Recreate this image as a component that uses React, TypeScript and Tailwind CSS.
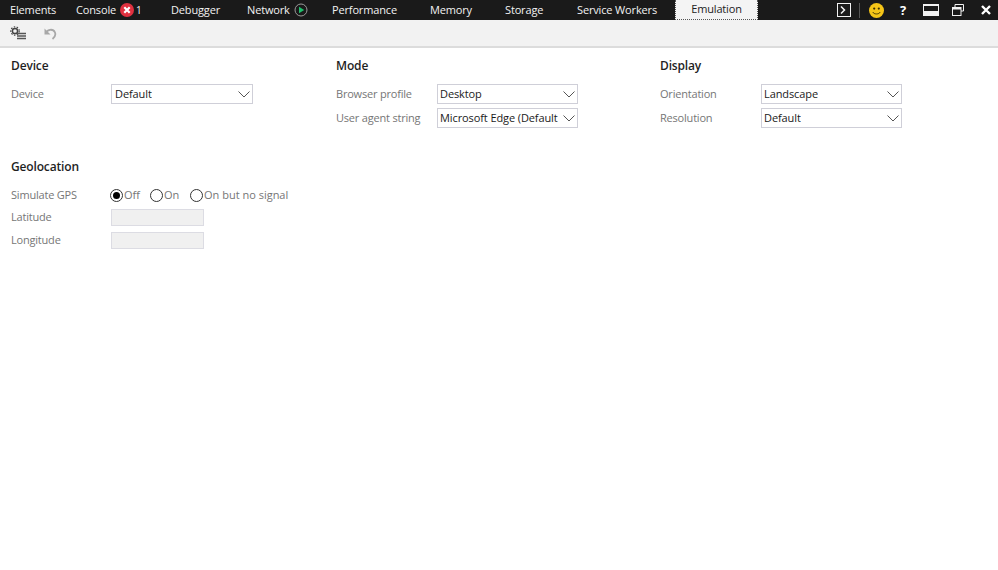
const tabs = [
  { name: 'Elements', width: 'w-[66px]' },
  { name: 'Console', width: 'w-[95px]', error: true },
  { name: 'Debugger', width: 'w-[76px]' },
  { name: 'Network', width: 'w-[85px]', play: true },
  { name: 'Performance', width: 'w-[98px]' },
  { name: 'Memory', width: 'w-[75px]' },
  { name: 'Storage', width: 'w-[72px]' },
  { name: 'Service Workers', width: 'w-[108px]' },
]

function ErrorBadge() {
  return (
    <svg width="14" height="14" viewBox="0 0 14 14" className="ml-[4px]">
      <circle cx="7" cy="7" r="7" fill="#e0313f" />
      <path d="M4.3 4.3l5.4 5.4M9.7 4.3l-5.4 5.4" stroke="#fff" strokeWidth="2.2" />
    </svg>
  )
}

function PlayBadge() {
  return (
    <svg width="14" height="14" viewBox="0 0 14 14" className="ml-[4px]">
      <circle cx="7" cy="7" r="6" fill="none" stroke="#9a9a9a" strokeWidth="1" />
      <path d="M5 3.8L10.2 7 5 10.2z" fill="#1fbf6b" />
    </svg>
  )
}

function Select({ value, wide }: { value: string; wide?: boolean }) {
  return (
    <div
      className={`flex h-[20px] items-center justify-between border border-[#cfcfd8] bg-white pr-[2px] text-[11px] tracking-[-0.1px] text-[#1a1a1a] ${
        wide ? 'w-[141px] pl-[2px]' : 'w-[142px] pl-[3px]'
      }`}
    >
      <span className="overflow-hidden whitespace-nowrap">{value}</span>
      <svg width="12" height="7" viewBox="0 0 12 7" className="shrink-0">
        <path d="M0.5 0.5L6 6l5.5-5.5" fill="none" stroke="#555555" strokeWidth="1" />
      </svg>
    </div>
  )
}

function Row({ label, wide, children }: { label: string; wide?: boolean; children: React.ReactNode }) {
  return (
    <div className="flex items-center">
      <div className={`shrink-0 text-[11px] tracking-[-0.2px] text-[#767676] ${wide ? 'w-[101px]' : 'w-[100px]'}`}>
        {label}
      </div>
      {children}
    </div>
  )
}

function Radio({ label, checked, className }: { label: string; checked?: boolean; className: string }) {
  return (
    <div className={`flex items-center ${className}`}>
      <span className="flex h-[13px] w-[13px] items-center justify-center rounded-full border border-[#333333] bg-white">
        {checked && <span className="h-[7px] w-[7px] rounded-full bg-black" />}
      </span>
      <span className="ml-[1px] text-[11px] text-[#767676]">{label}</span>
    </div>
  )
}

function Heading({ children, className }: { children: React.ReactNode; className: string }) {
  return (
    <h2 className={`h-[20px] text-[12px] font-semibold leading-[20px] tracking-[-0.15px] text-[#1f1f1f] ${className}`}>
      {children}
    </h2>
  )
}

export default function App() {
  return (
    <div
      className="h-[570px] w-[998px] overflow-hidden bg-white"
      style={{ fontFamily: '"Open Sans", "Noto Sans", sans-serif' }}
    >
      {/* Tab bar */}
      <div className="flex h-[20px] items-center bg-[#1a1a1a] text-[11px] tracking-[-0.15px] text-[#f2f2f2]">
        {tabs.map((tab) => (
          <div key={tab.name} className={`flex h-full shrink-0 items-center whitespace-nowrap pl-[10px] ${tab.width}`}>
            {tab.name}
            {tab.error && (
              <>
                <ErrorBadge />
                <span className="ml-[2px] text-[10px]">1</span>
              </>
            )}
            {tab.play && <PlayBadge />}
          </div>
        ))}
        <div className="flex h-full w-[83px] shrink-0 items-center justify-center border-x border-b border-dotted border-[#555555] bg-[#f4f4f4] text-[#222222]">
          Emulation
        </div>
        <div className="ml-[79px] flex items-center">
          <svg width="14" height="14" viewBox="0 0 14 14">
            <rect x="0.5" y="0.5" width="13" height="13" fill="none" stroke="#f2f2f2" />
            <path d="M4 3.5L7.5 7 4 10.5" fill="none" stroke="#f2f2f2" strokeWidth="1.5" />
          </svg>
          <div className="ml-[8px] h-[15px] w-px bg-[#555555]" />
          <svg width="15" height="15" viewBox="0 0 15 15" className="ml-[9px]">
            <circle cx="7.5" cy="7.5" r="7.5" fill="#f5c518" />
            <circle cx="5.2" cy="5.6" r="1.1" fill="#3a3000" />
            <circle cx="9.8" cy="5.6" r="1.1" fill="#3a3000" />
            <path d="M3.8 9c1 2.6 6.4 2.6 7.4 0" fill="none" stroke="#3a3000" strokeWidth="0.9" />
          </svg>
          <span className="ml-[16px] w-[8px] text-[13px] font-bold leading-none text-white">?</span>
          <svg width="16" height="12" viewBox="0 0 16 12" className="ml-[15px]">
            <rect x="0.5" y="0.5" width="15" height="11" fill="none" stroke="#f2f2f2" />
            <rect x="0" y="0" width="16" height="2" fill="#f2f2f2" />
            <rect x="0" y="7" width="16" height="5" fill="#f2f2f2" />
          </svg>
          <svg width="12" height="12" viewBox="0 0 12 12" className="ml-[13px]">
            <path d="M3 3V.5h8.5V7H9" fill="none" stroke="#f2f2f2" />
            <rect x="0.5" y="3.5" width="8.5" height="8" fill="none" stroke="#f2f2f2" />
            <rect x="0.5" y="3.5" width="8.5" height="2" fill="#f2f2f2" />
          </svg>
          <svg width="10" height="10" viewBox="0 0 10 10" className="ml-[17px]">
            <path d="M1 1l8 8M9 1l-8 8" stroke="#ffffff" strokeWidth="2.4" />
          </svg>
        </div>
      </div>

      {/* Toolbar */}
      <div className="flex h-[28px] items-center border-b-2 border-[#dcdcdc] bg-[#f2f2f2] pl-[10px]">
        <svg width="16" height="14" viewBox="0 0 16 14">
          <circle cx="5" cy="5" r="2.6" fill="none" stroke="#444444" strokeWidth="1.5" />
          <circle cx="5" cy="5" r="4.2" fill="none" stroke="#444444" strokeWidth="1.2" strokeDasharray="1.5 1.5" />
          <path d="M7 7.5h9M7 10h9M7 12.5h9" stroke="#555555" strokeWidth="1.4" />
        </svg>
        <svg width="14" height="14" viewBox="0 0 14 14" className="ml-[17px]">
          <path d="M3 7.5C3.5 3.5 10 2 12 6.5c.9 2.5-.5 5-2.5 6.5" fill="none" stroke="#a8a8a8" strokeWidth="1.8" />
          <path d="M1.5 2.5v6h6z" fill="#a8a8a8" />
        </svg>
      </div>

      {/* Settings */}
      <div className="grid grid-cols-[325px_324px_1fr] pl-[11px] pt-[8px]">
        <section>
          <Heading className="mb-[8px]">Device</Heading>
          <Row label="Device">
            <Select value="Default" />
          </Row>
        </section>
        <section>
          <Heading className="mb-[8px]">Mode</Heading>
          <div className="flex flex-col gap-[4px]">
            <Row label="Browser profile" wide>
              <Select value="Desktop" wide />
            </Row>
            <Row label="User agent string" wide>
              <Select value="Microsoft Edge (Default" wide />
            </Row>
          </div>
        </section>
        <section>
          <Heading className="mb-[8px]">Display</Heading>
          <div className="flex flex-col gap-[4px]">
            <Row label="Orientation" wide>
              <Select value="Landscape" wide />
            </Row>
            <Row label="Resolution" wide>
              <Select value="Default" wide />
            </Row>
          </div>
        </section>
      </div>

      <section className="mt-[29px] pl-[11px]">
        <Heading className="mb-[9px]">Geolocation</Heading>
        <div className="flex flex-col">
          <Row label="Simulate GPS">
            <div className="-ml-px flex h-[18px] items-center">
              <Radio label="Off" checked className="w-[40px]" />
              <Radio label="On" className="w-[40px]" />
              <Radio label="On but no signal" className="" />
            </div>
          </Row>
          <div className="mt-[5px] flex flex-col gap-[6px]">
            <Row label="Latitude">
              <div className="h-[17px] w-[93px] border border-[#dcdce3] bg-[#f0f0f0]" />
            </Row>
            <Row label="Longitude">
              <div className="h-[17px] w-[93px] border border-[#dcdce3] bg-[#f0f0f0]" />
            </Row>
          </div>
        </div>
      </section>
    </div>
  )
}
